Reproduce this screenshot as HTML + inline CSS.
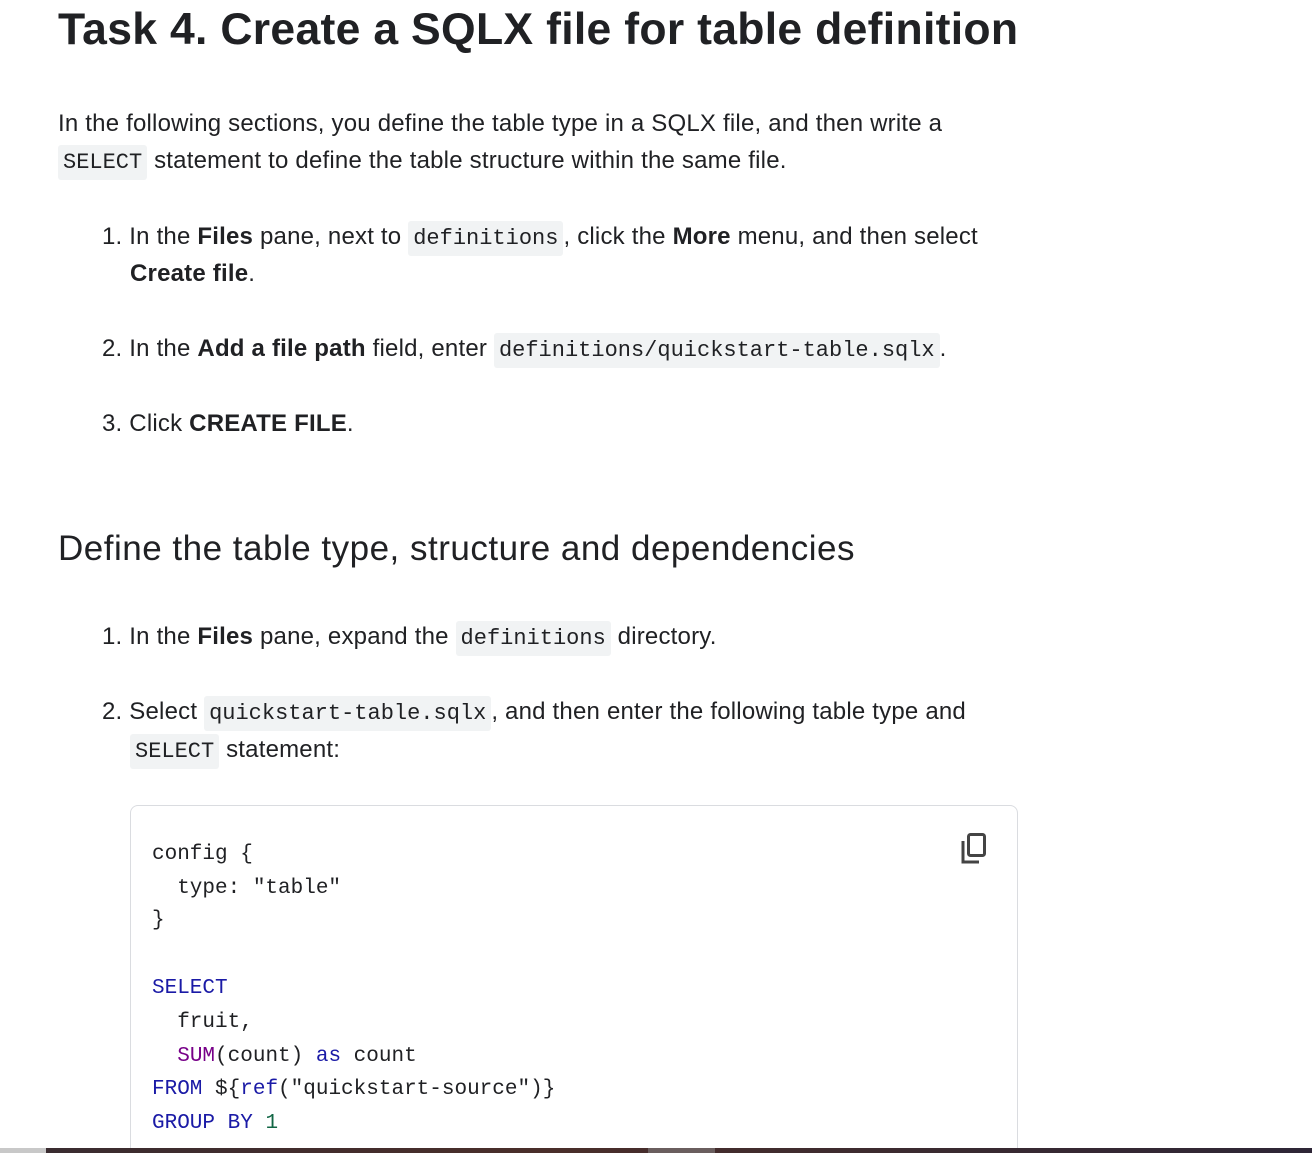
<!DOCTYPE html>
<html><head><meta charset="utf-8"><style>
html,body{margin:0;width:1312px;height:1153px;overflow:hidden}
body{background:#fff;font-family:"Liberation Sans",Arial,sans-serif;color:#202124;position:relative}
.l{position:absolute;font-size:24px;letter-spacing:0.2px;line-height:38px;white-space:nowrap}
code{font-family:"Liberation Mono",monospace;font-size:22px;letter-spacing:0;background:#f1f3f4;padding:5px 5px;border-radius:3px}
b{font-weight:bold}
h1{position:absolute;left:58px;top:2px;margin:0;font-size:44.5px;line-height:56px;font-weight:bold;white-space:nowrap;letter-spacing:0.3px}
h2{position:absolute;left:58px;top:527px;margin:0;font-size:35px;letter-spacing:0.5px;line-height:44px;font-weight:normal;white-space:nowrap}
.box{position:absolute;left:130px;top:805px;width:886px;height:360px;border:1px solid #dadce0;border-radius:8px}
.c{position:absolute;left:152px;font-family:"Liberation Mono",monospace;font-size:21px;line-height:30px;white-space:pre;color:#202124}
.k{color:#1a1aa6}.p{color:#770088}.n{color:#116644}
</style></head><body>
<h1>Task 4. Create a SQLX file for table definition</h1>
<div class="l" style="left:58px;top:105px">In the following sections, you define the table type in a SQLX file, and then write a</div>
<div class="l" style="left:58px;top:142px"><code>SELECT</code> statement to define the table structure within the same file.</div>
<div class="l" style="left:102px;top:218px">1. In the <b>Files</b> pane, next to <code>definitions</code>, click the <b>More</b> menu, and then select</div>
<div class="l" style="left:130px;top:255px"><b>Create file</b>.</div>
<div class="l" style="left:102px;top:330px">2. In the <b>Add a file path</b> field, enter <code>definitions/quickstart-table.sqlx</code>.</div>
<div class="l" style="left:102px;top:405px">3. Click <b>CREATE FILE</b>.</div>
<h2>Define the table type, structure and dependencies</h2>
<div class="l" style="left:102px;top:618px">1. In the <b>Files</b> pane, expand the <code>definitions</code> directory.</div>
<div class="l" style="left:102px;top:693px">2. Select <code>quickstart-table.sqlx</code>, and then enter the following table type and</div>
<div class="l" style="left:130px;top:731px"><code>SELECT</code> statement:</div>
<div class="box"></div>
<svg style="position:absolute;left:958px;top:831px" width="32" height="34" viewBox="0 0 32 34"><path d="M5 10V31H21" fill="none" stroke="#444" stroke-width="3"/><rect x="10.5" y="3.5" width="16" height="21" rx="2" fill="none" stroke="#444" stroke-width="3"/></svg>
<div class="c" style="top:840px">config {</div>
<div class="c" style="top:874px">  type: "table"</div>
<div class="c" style="top:906px">}</div>
<div class="c" style="top:974px"><span class="k">SELECT</span></div>
<div class="c" style="top:1008px">  fruit,</div>
<div class="c" style="top:1042px">  <span class="p">SUM</span>(count) <span class="k">as</span> count</div>
<div class="c" style="top:1075px"><span class="k">FROM</span> ${<span class="k">ref</span>("quickstart-source")}</div>
<div class="c" style="top:1109px"><span class="k">GROUP BY</span> <span class="n">1</span></div>
<div style="position:absolute;left:0;top:1148px;width:46px;height:5px;background:#c8c8c8"></div>
<div style="position:absolute;left:46px;top:1148px;width:1266px;height:5px;background:linear-gradient(90deg,#3a2c30,#4a2e2a 40%,#3a2a30 70%,#2e2636)"></div>
<div style="position:absolute;left:648px;top:1148px;width:67px;height:5px;background:#6a5e5e"></div>
</body></html>
